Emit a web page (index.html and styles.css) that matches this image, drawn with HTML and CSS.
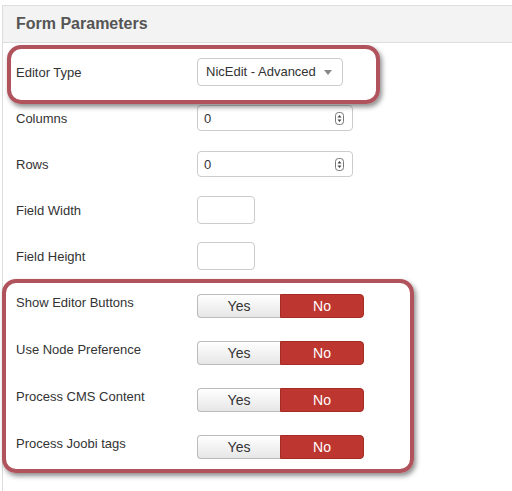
FILE: index.html
```html
<!DOCTYPE html>
<html lang="en">
<head>
    <meta charset="UTF-8">
    <title>Form Parameters</title>
    <link rel="stylesheet" href="styles.css">
</head>
<body>
    <div class="panel">
        <div class="panel-head">Form Parameters</div>
        <div class="panel-body">
            <div class="row">
                <label>Editor Type</label>
                <div class="select">NicEdit - Advanced<span class="caret"></span></div>
            </div>
            <div class="row">
                <label>Columns</label>
                <div class="input num">0
                    <svg class="spin" width="9" height="13" viewBox="0 0 9 13"><rect x="0.5" y="0.5" width="8" height="12" rx="3" fill="#fff" stroke="#777"/><path d="M2.5 5.5 L4.5 3 L6.5 5.5 Z M2.5 7.5 L4.5 10 L6.5 7.5 Z" fill="#444"/></svg>
                </div>
            </div>
            <div class="row">
                <label>Rows</label>
                <div class="input num">0
                    <svg class="spin" width="9" height="13" viewBox="0 0 9 13"><rect x="0.5" y="0.5" width="8" height="12" rx="3" fill="#fff" stroke="#777"/><path d="M2.5 5.5 L4.5 3 L6.5 5.5 Z M2.5 7.5 L4.5 10 L6.5 7.5 Z" fill="#444"/></svg>
                </div>
            </div>
            <div class="row">
                <label>Field Width</label>
                <div class="input small"></div>
            </div>
            <div class="row">
                <label>Field Height</label>
                <div class="input small"></div>
            </div>

            <div class="toggles">
                <div class="row tall">
                    <label>Show Editor Buttons</label>
                    <div class="toggle"><span class="yes">Yes</span><span class="no">No</span></div>
                </div>
                <div class="row tall">
                    <label>Use Node Preference</label>
                    <div class="toggle"><span class="yes">Yes</span><span class="no">No</span></div>
                </div>
                <div class="row tall">
                    <label>Process CMS Content</label>
                    <div class="toggle"><span class="yes">Yes</span><span class="no">No</span></div>
                </div>
                <div class="row tall">
                    <label>Process Joobi tags</label>
                    <div class="toggle"><span class="yes">Yes</span><span class="no">No</span></div>
                </div>
            </div>
        </div>
    </div>

    <!-- red call-out frames drawn over the form -->
    <div class="mark mark-1"></div>
    <div class="mark mark-2"></div>
</body>
</html>
```

FILE: styles.css
```css
*{
    margin: 0;padding: 0;box-sizing: border-box;
}
body{
    width: 512px;
    height: 491px;
    background-color: #fff;
    font-family: "Liberation Sans", Arial, Helvetica, sans-serif;
    font-size: 13px;
    color: #333;
    position: relative;
    overflow: hidden;
}
.panel{
    margin: 5px 0 0 2px;
    border-left: 1px solid #ddd;
    height: 486px;
}
.panel-head{
    height: 38px;
    background-color: #f3f3f3;
    border-top: 1px solid #ddd;
    border-bottom: 1px solid #ddd;
    padding-left: 13px;
    line-height: 36px;
    font-size: 16px;
    font-weight: bold;
    color: #555;
}
.panel-body{
    padding-top: 6px;
}
.row{
    display: flex;
    align-items: center;
    height: 46px;
    padding-left: 13px;
}
.row>label{
    width: 181px;
    flex-shrink: 0;
}
.toggles{
    padding-top: 2px;
}
.row.tall{
    height: 47px;
}
.row.tall>label{
    margin-top: -4px;
}
.select{
    width: 146px;
    height: 28px;
    border: 1px solid #ccc;
    border-radius: 4px;
    padding-left: 8px;
    line-height: 26px;
    display: flex;
    align-items: center;
    justify-content: space-between;
    padding-right: 10px;
}
.caret{
    width: 0;
    height: 0;
    border-left: 4px solid transparent;
    border-right: 4px solid transparent;
    border-top: 5px solid #888;
}
.input{
    height: 26px;
    border: 1px solid #ccc;
    border-radius: 4px;
    display: flex;
    align-items: center;
}
.input.num{
    width: 156px;
    padding: 0 8px 0 6px;
    justify-content: space-between;
}
.input.small{
    width: 58px;
    height: 28px;
}
.toggle{
    display: flex;
    width: 167px;
    height: 24px;
    margin-top: 3px;
}
.toggle>span{
    flex: 1;
    text-align: center;
    line-height: 22px;
    font-size: 14px;
}
.yes{
    background: linear-gradient(#fff, #e6e6e6);
    border: 1px solid #bbb;
    border-right: none;
    border-radius: 4px 0 0 4px;
    color: #333;
}
.no{
    background-color: #bd362f;
    border: 1px solid #a52b25;
    border-radius: 0 4px 4px 0;
    color: #fff;
}
.mark{
    position: absolute;
    border: 4px solid #b0535d;
    border-radius: 14px;
    box-shadow: 2px 3px 5px rgba(0, 0, 0, 0.45);
}
.mark-1{
    left: 7px;
    top: 45px;
    width: 373px;
    height: 59px;
}
.mark-2{
    left: 2px;
    top: 279px;
    width: 412px;
    height: 194px;
}
```
